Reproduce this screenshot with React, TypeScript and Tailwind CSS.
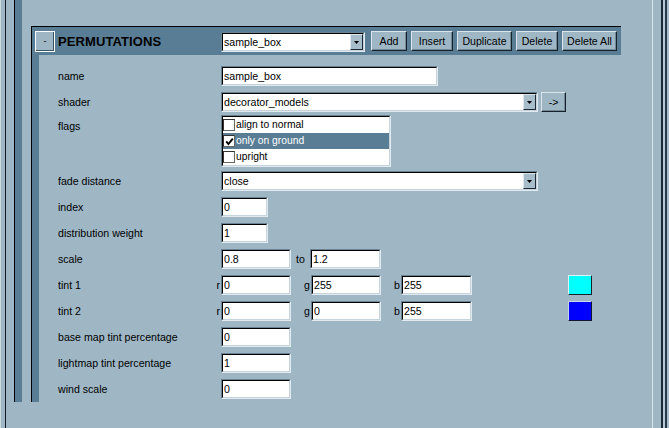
import React from "react";

function Sunken({ className, children }: { className: string; children?: React.ReactNode }) {
  return (
    <div
      className={`${className} border border-t-[#6a8393] border-l-[#6a8393] border-r-[#e2eaef] border-b-[#e2eaef]`}
    >
      <div className="h-full w-full border border-t-black border-l-black border-r-[#c5d3dc] border-b-[#c5d3dc] bg-white flex items-center overflow-hidden">
        {children}
      </div>
    </div>
  );
}

function Arrow() {
  return (
    <div className="w-[13px] h-full shrink-0 bg-[#a7bdca] border border-t-[#dde6ec] border-l-[#dde6ec] border-r-[#1c2833] border-b-[#1c2833] flex items-center justify-center">
      <svg width="5" height="3" viewBox="0 0 5 3">
        <path d="M0 0H5L2.5 3Z" fill="black" />
      </svg>
    </div>
  );
}

function Dropdown({ className, value }: { className: string; value: string }) {
  return (
    <Sunken className={className}>
      <span className="flex-1 pl-[1px] whitespace-nowrap">{value}</span>
      <Arrow />
    </Sunken>
  );
}

function Btn({ className, children }: { className: string; children: React.ReactNode }) {
  return (
    <div
      className={`${className} h-[20px] shrink-0 flex items-center justify-center bg-[#9fb7c5] border border-t-[#dbe5eb] border-l-[#dbe5eb] border-r-[#16212a] border-b-[#16212a] shadow-[inset_-1px_-1px_0_#72899a] whitespace-nowrap`}
    >
      {children}
    </div>
  );
}

function Check({ checked }: { checked?: boolean }) {
  return (
    <div className="w-[12px] h-[12px] shrink-0 bg-white border border-t-[#333] border-l-[#333] border-r-[#666] border-b-[#666] flex items-center justify-center">
      {checked && (
        <svg width="9" height="9" viewBox="0 0 9 9">
          <path d="M1.2 4.4 L3.4 7 L7.8 1.6" stroke="black" strokeWidth="1.9" fill="none" />
        </svg>
      )}
    </div>
  );
}

function Field({ className, value }: { className: string; value: string }) {
  return (
    <Sunken className={className}>
      <span className="pl-[1px] whitespace-nowrap">{value}</span>
    </Sunken>
  );
}

function Row({ label, children, mt }: { label: React.ReactNode; children: React.ReactNode; mt: string }) {
  return (
    <div className={`${mt} flex items-center h-[20px]`}>
      <div className="w-[163px] shrink-0 flex items-center justify-between">{label}</div>
      {children}
    </div>
  );
}

export default function App() {
  return (
    <div className="w-[669px] h-[428px] bg-[#9fb7c5] flex overflow-hidden font-['Liberation_Sans',Arial,sans-serif] text-[10.6px] leading-none text-black">
      {/* left decorations */}
      <div className="w-[1px] h-full bg-[#cbd9e1] shrink-0" />
      <div className="w-[4px] shrink-0" />
      <div className="w-[1px] h-full bg-[#111a22] shrink-0" />
      <div className="w-[8px] shrink-0" />
      <div className="w-[8px] h-[402px] shrink-0 border-l border-l-black bg-[#587d95]" />
      <div className="w-[9px] shrink-0" />

      {/* panel */}
      <div className="w-[590px] shrink-0 pt-[26px] flex flex-col">
        <div className="h-[29px] border-t border-l border-t-black border-l-black bg-[#587d95] flex items-start pl-[3px]">
          <div className="mt-[4px] w-[20px] h-[21px] border border-white bg-[#9fb7c5] shadow-[inset_-1px_-1px_0_#3b5566] flex items-center justify-center text-[9px]">
            -
          </div>
          <div className="ml-[3px] w-[163px] h-[20px] mt-[4px] flex items-center font-bold text-[13px] tracking-[0.1px]">
            PERMUTATIONS
          </div>
          <div className="mt-[5px] flex items-start">
            <Dropdown className="w-[144px] h-[20px]" value="sample_box" />
            <div className="ml-[6px] flex gap-[4px] -mt-[1px]">
              <Btn className="w-[36px]">Add</Btn>
              <Btn className="w-[42px]">Insert</Btn>
              <Btn className="w-[55px]">Duplicate</Btn>
              <Btn className="w-[42px]">Delete</Btn>
              <Btn className="w-[55px]">Delete All</Btn>
            </div>
          </div>
        </div>

        <div className="flex">
          <div className="w-[8px] h-[347px] shrink-0 border-l border-l-black bg-[#587d95]" />
          <div className="pl-[19px] pt-[11px] flex flex-col">
            <Row mt="mt-0" label={<span>name</span>}>
              <Field className="w-[217px] h-[20px]" value="sample_box" />
            </Row>
            <Row mt="mt-[6px]" label={<span>shader</span>}>
              <Dropdown className="w-[317px] h-[20px]" value="decorator_models" />
              <Btn className="ml-[3px] w-[25px]">-&gt;</Btn>
            </Row>
            <div className="mt-[3px] flex items-start h-[52px]">
              <div className="w-[163px] shrink-0 pt-[6px]">flags</div>
              <Sunken className="w-[170px] h-[52px]">
                <div className="w-full h-full flex flex-col text-[10.3px]">
                  <div className="h-[16px] flex items-center gap-[1px]">
                    <Check />
                    <span>align to normal</span>
                  </div>
                  <div className="h-[16px] flex items-center gap-[1px] bg-[#587d95] text-white">
                    <Check checked />
                    <span>only on ground</span>
                  </div>
                  <div className="h-[16px] flex items-center gap-[1px]">
                    <Check />
                    <span>upright</span>
                  </div>
                </div>
              </Sunken>
            </div>
            <Row mt="mt-[4px]" label={<span>fade distance</span>}>
              <Dropdown className="w-[317px] h-[20px]" value="close" />
            </Row>
            <Row mt="mt-[6px]" label={<span>index</span>}>
              <Field className="w-[47px] h-[20px]" value="0" />
            </Row>
            <Row mt="mt-[6px]" label={<span>distribution weight</span>}>
              <Field className="w-[47px] h-[20px]" value="1" />
            </Row>
            <Row mt="mt-[6px]" label={<span>scale</span>}>
              <Field className="w-[70px] h-[20px]" value="0.8" />
              <div className="w-[19px] pl-[5px]">to</div>
              <Field className="w-[71px] h-[20px]" value="1.2" />
            </Row>
            <Row
              mt="mt-[6px]"
              label={
                <>
                  <span>tint 1</span>
                  <span className="pr-[1px]">r</span>
                </>
              }
            >
              <Field className="w-[70px] h-[20px]" value="0" />
              <div className="w-[20px] text-right pr-[1px]">g</div>
              <Field className="w-[70px] h-[20px]" value="255" />
              <div className="w-[20px] text-right pr-[1px]">b</div>
              <Field className="w-[71px] h-[20px]" value="255" />
              <div className="ml-[96px] w-[24px] h-[20px] bg-[#00ffff] border border-t-[#d9f3f7] border-l-[#d9f3f7] border-r-[#1a2230] border-b-[#1a2230]" />
            </Row>
            <Row
              mt="mt-[6px]"
              label={
                <>
                  <span>tint 2</span>
                  <span className="pr-[1px]">r</span>
                </>
              }
            >
              <Field className="w-[70px] h-[20px]" value="0" />
              <div className="w-[20px] text-right pr-[1px]">g</div>
              <Field className="w-[70px] h-[20px]" value="0" />
              <div className="w-[20px] text-right pr-[1px]">b</div>
              <Field className="w-[71px] h-[20px]" value="255" />
              <div className="ml-[96px] w-[24px] h-[20px] bg-[#0000ff] border border-t-[#c9d5f0] border-l-[#c9d5f0] border-r-[#101830] border-b-[#101830]" />
            </Row>
            <Row mt="mt-[6px]" label={<span>base map tint percentage</span>}>
              <Field className="w-[70px] h-[20px]" value="0" />
            </Row>
            <Row mt="mt-[6px]" label={<span>lightmap tint percentage</span>}>
              <Field className="w-[70px] h-[20px]" value="1" />
            </Row>
            <Row mt="mt-[6px]" label={<span>wind scale</span>}>
              <Field className="w-[70px] h-[20px]" value="0" />
            </Row>
          </div>
        </div>
      </div>

      {/* right decorations */}
      <div className="w-[31px] shrink-0" />
      <div className="w-[1px] h-full bg-[#d9e4ea] shrink-0" />
      <div className="w-[8px] shrink-0" />
      <div className="w-[2px] h-full bg-[#1c2a38] shrink-0" />
      <div className="w-[2px] h-full bg-[#b5c8d3] shrink-0" />
      <div className="w-[2px] h-full bg-[#26384a] shrink-0" />
      <div className="w-[2px] h-full bg-[#a6bccb] shrink-0" />
    </div>
  );
}
